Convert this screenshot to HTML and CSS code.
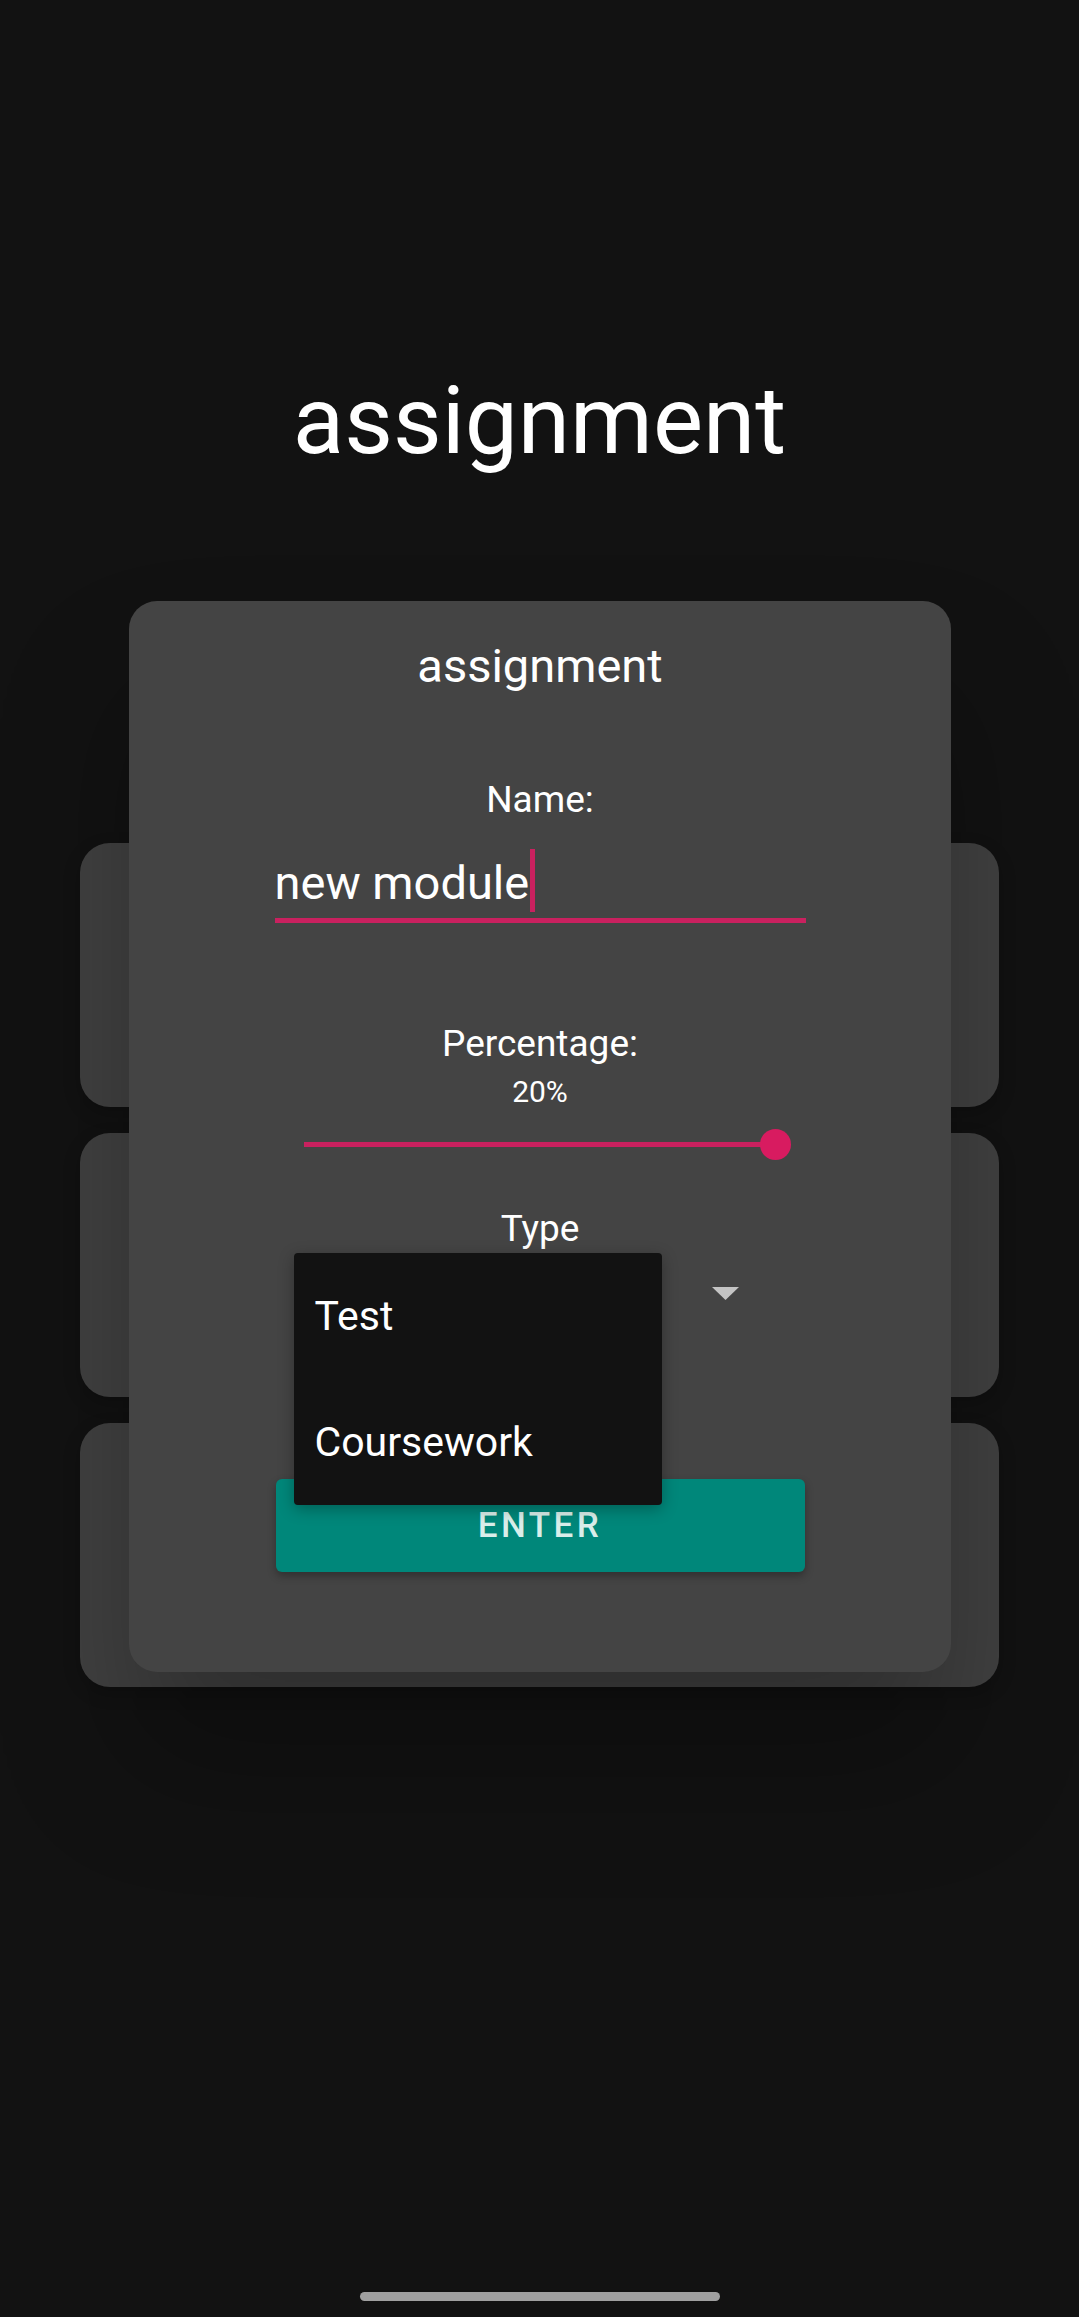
FILE: index.html
```html
<!DOCTYPE html>
<html lang="en">
<head>
    <meta charset="UTF-8">
    <title>assignment</title>
    <link rel="stylesheet" href="styles.css">
</head>
<body>
    <div class="screen">
        <h1 class="page-title">assignment</h1>

        <div class="card-list">
            <div class="card"></div>
            <div class="card"></div>
            <div class="card"></div>
        </div>

        <div class="nav-handle"></div>

        <!-- диалог добавления задания -->
        <div class="dialog">
            <div class="dialog-title">assignment</div>

            <div class="field-label label-name">Name:</div>
            <div class="text-input">new module<span class="caret"></span></div>

            <div class="field-label label-percent">Percentage:</div>
            <div class="percent-value">20%</div>
            <div class="slider">
                <div class="slider-track"></div>
                <div class="slider-thumb"></div>
            </div>

            <div class="field-label label-type">Type</div>
            <div class="spinner">
                <svg class="spinner-arrow" width="27" height="13" viewBox="0 0 27 13">
                    <path d="M0 0 L27 0 L13.5 13 Z" fill="#c4c4c4"/>
                </svg>
                <ul class="spinner-menu">
                    <li class="spinner-item">Test</li>
                    <li class="spinner-item">Coursework</li>
                </ul>
            </div>

            <button class="enter-button">ENTER</button>
        </div>
    </div>
</body>
</html>
```

FILE: styles.css
```css
* {
    box-sizing: border-box;
}

body {
    margin: 0;
    background-color: #121212;
    font-family: Roboto, "Noto Sans", Arial, sans-serif;
    color: #ffffff;
}

.screen {
    position: relative;
    height: 2317px;
    overflow: hidden;
    display: flex;
    flex-direction: column;
    align-items: center;
}

.page-title {
    margin: 0;
    padding-top: 366px;
    font-size: 94.5px;
    line-height: 110px;
    font-weight: 400;
    text-align: center;
}

.card-list {
    margin-top: 367px;
    display: flex;
    flex-direction: column;
    gap: 26px;
}

.card {
    width: 919px;
    height: 264px;
    background-color: #414141;
    border-radius: 30px;
    box-shadow: 0 6px 18px rgba(0, 0, 0, 0.2);
}

.nav-handle {
    margin-top: auto;
    margin-bottom: 16px;
    width: 360px;
    height: 9px;
    border-radius: 5px;
    background-color: #a0a0a0;
}

.dialog {
    position: absolute;
    left: 129px;
    top: 601px;
    width: 822px;
    height: 1071px;
    background-color: #444444;
    border-radius: 28px;
    box-shadow: 0 90px 130px rgba(0, 0, 0, 0.28);
    display: flex;
    flex-direction: column;
    align-items: center;
    padding-top: 37px;
}

.dialog-title {
    font-size: 47px;
    line-height: 56px;
}

.field-label {
    font-size: 37px;
    line-height: 44px;
}

.label-name {
    margin-top: 84px;
}

.text-input {
    margin-top: 32px;
    width: 531px;
    font-size: 47px;
    line-height: 58px;
    padding-bottom: 6px;
    border-bottom: 5px solid #c9215f;
    white-space: nowrap;
}

.caret {
    display: inline-block;
    width: 5px;
    height: 63px;
    margin-top: -6px;
    margin-left: 1px;
    vertical-align: -13px;
    background-color: #c9215f;
}

.label-percent {
    margin-top: 99px;
}

.percent-value {
    margin-top: 8px;
    font-size: 30px;
    line-height: 36px;
}

.slider {
    position: relative;
    margin-top: 19px;
    width: 472px;
    height: 31px;
}

.slider-track {
    position: absolute;
    left: 0;
    right: 0;
    top: 13px;
    height: 5px;
    background-color: #c9215f;
}

.slider-thumb {
    position: absolute;
    right: -15px;
    top: 0;
    width: 31px;
    height: 31px;
    border-radius: 50%;
    background-color: #d81b60;
}

.label-type {
    margin-top: 47px;
}

.spinner {
    position: relative;
    width: 531px;
    height: 84px;
    display: flex;
    align-items: center;
    justify-content: flex-end;
    padding-right: 67px;
}

.spinner-menu {
    position: absolute;
    left: 19px;
    top: 2px;
    width: 368px;
    margin: 0;
    padding: 0;
    list-style-type: none;
    background-color: #121212;
    border-radius: 4px;
    box-shadow: 0 4px 16px rgba(0, 0, 0, 0.3);
    z-index: 10;
}

.spinner-item {
    height: 126px;
    display: flex;
    align-items: center;
    padding-left: 21px;
    font-size: 41px;
}

.enter-button {
    margin-top: 144px;
    width: 529px;
    height: 93px;
    border: none;
    border-radius: 6px;
    background-color: #00877a;
    color: #d9eeea;
    font-family: Roboto, "Noto Sans", Arial, sans-serif;
    font-size: 35px;
    font-weight: 500;
    letter-spacing: 3.5px;
    box-shadow: 0 4px 8px rgba(0, 0, 0, 0.3);
}
```
